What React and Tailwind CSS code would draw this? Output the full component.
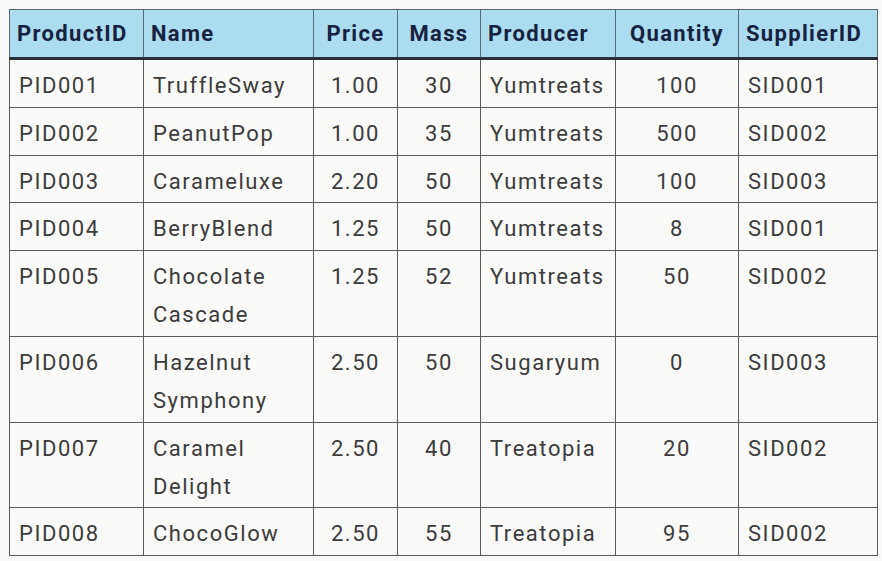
import React from "react";

const columns = [
  { key: "id", label: "ProductID", width: "w-[134px]", align: "text-left" },
  { key: "name", label: "Name", width: "w-[170px]", align: "text-left" },
  { key: "price", label: "Price", width: "w-[84px]", align: "text-center" },
  { key: "mass", label: "Mass", width: "w-[83px]", align: "text-center" },
  { key: "producer", label: "Producer", width: "w-[135px]", align: "text-left" },
  { key: "qty", label: "Quantity", width: "w-[123px]", align: "text-center" },
  { key: "supplier", label: "SupplierID", width: "w-[139px]", align: "text-left" },
];

const products = [
  { id: "PID001", name: "TruffleSway", price: "1.00", mass: "30", producer: "Yumtreats", qty: "100", supplier: "SID001" },
  { id: "PID002", name: "PeanutPop", price: "1.00", mass: "35", producer: "Yumtreats", qty: "500", supplier: "SID002" },
  { id: "PID003", name: "Carameluxe", price: "2.20", mass: "50", producer: "Yumtreats", qty: "100", supplier: "SID003" },
  { id: "PID004", name: "BerryBlend", price: "1.25", mass: "50", producer: "Yumtreats", qty: "8", supplier: "SID001" },
  { id: "PID005", name: "Chocolate Cascade", price: "1.25", mass: "52", producer: "Yumtreats", qty: "50", supplier: "SID002" },
  { id: "PID006", name: "Hazelnut Symphony", price: "2.50", mass: "50", producer: "Sugaryum", qty: "0", supplier: "SID003" },
  { id: "PID007", name: "Caramel Delight", price: "2.50", mass: "40", producer: "Treatopia", qty: "20", supplier: "SID002" },
  { id: "PID008", name: "ChocoGlow", price: "2.50", mass: "55", producer: "Treatopia", qty: "95", supplier: "SID002" },
];

const App = () => {
  return (
    <div className="min-h-screen bg-[#fafaf8] p-[9px] font-['Roboto',_sans-serif]">
      <table className="table-fixed border-collapse border border-[#4a4a4a] w-[868px]">
        <thead>
          <tr className="bg-[#abdcef] h-[49px]">
            {columns.map((col) => (
              <th
                key={col.key}
                className={`${col.width} ${col.align} border border-[#5a6670] border-b-[3px] border-b-[#2a2f38] px-[7px] text-[22px] font-bold tracking-[0.06em] text-[#172140] align-middle whitespace-nowrap`}
              >
                {col.label}
              </th>
            ))}
          </tr>
        </thead>
        <tbody>
          {products.map((p) => (
            <tr key={p.id}>
              {columns.map((col) => (
                <td
                  key={col.key}
                  className={`${col.align} border border-[#5a5a5a] px-[9px] pt-[7px] pb-[1.75px] align-top text-[22px] leading-[38px] tracking-[0.07em] text-[#3c3c3c]`}
                >
                  {p[col.key]}
                </td>
              ))}
            </tr>
          ))}
        </tbody>
      </table>
    </div>
  );
};

export default App;
